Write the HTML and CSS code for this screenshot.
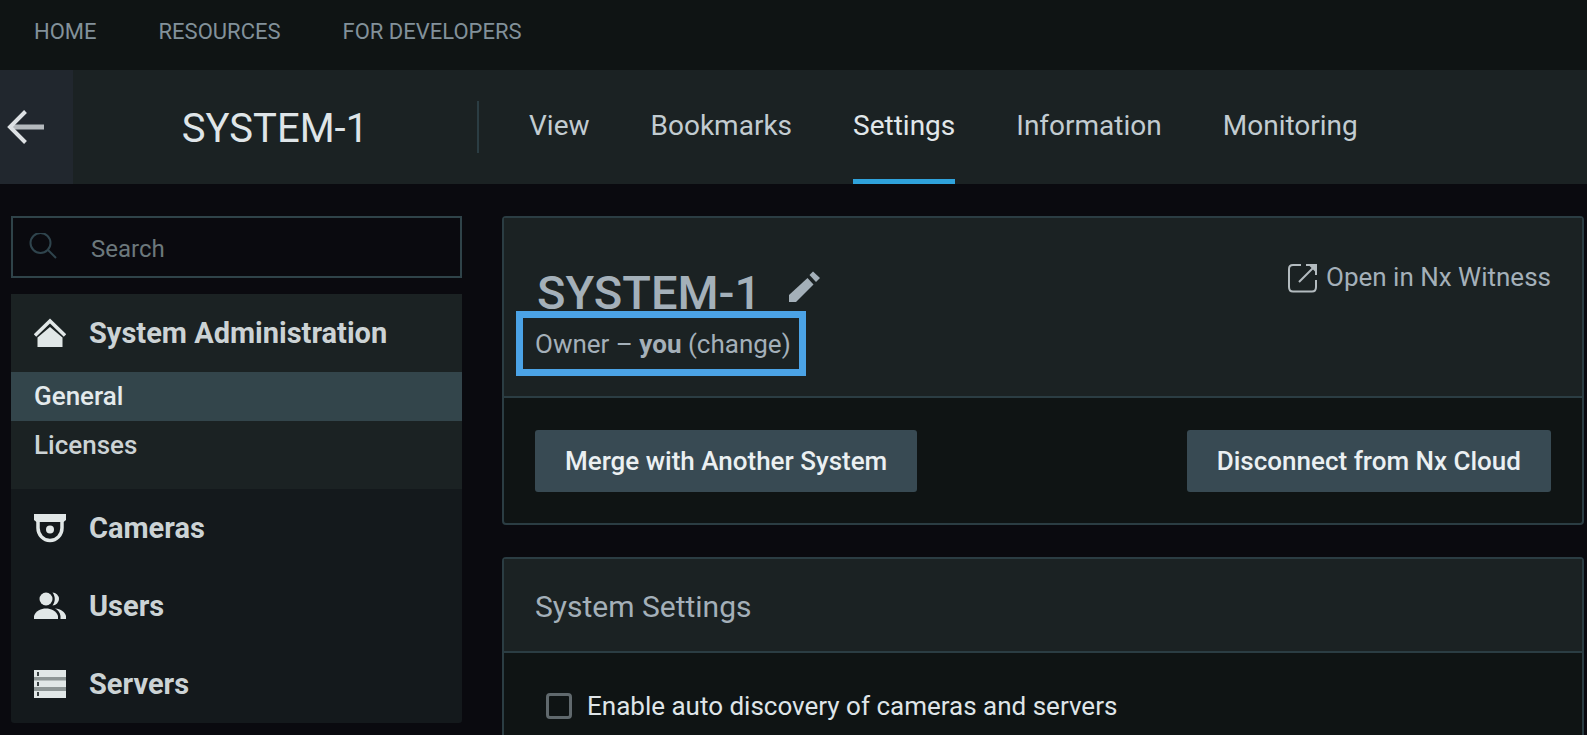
FILE: index.html
```html
<!DOCTYPE html>
<html lang="en">
<head>
    <meta charset="UTF-8">
    <meta name="viewport" content="width=device-width, initial-scale=1.0">
    <title>SYSTEM-1</title>
    <link rel="stylesheet" href="styles.css">
</head>
<body>
    <nav class="top-nav">
        <a href="#">HOME</a>
        <a href="#">RESOURCES</a>
        <a href="#">FOR DEVELOPERS</a>
    </nav>

    <header class="header">
        <button class="back" aria-label="Back">
            <svg width="38" height="36" viewBox="0 0 38 36" fill="none">
                <path d="M4 18H37" stroke="#b4b9bd" stroke-width="5"/>
                <path d="M18.500 2.500L3 18L18.500 33.500" stroke="#dde1e4" stroke-width="4"/>
            </svg>
        </button>
        <div class="system-name">SYSTEM-1</div>
        <nav class="tabs">
            <a href="#">View</a>
            <a href="#">Bookmarks</a>
            <a href="#" class="active">Settings</a>
            <a href="#">Information</a>
            <a href="#">Monitoring</a>
        </nav>
    </header>

    <div class="layout">
        <aside class="sidebar">
            <label class="search">
                <svg width="28" height="28" viewBox="0 0 28 28" fill="none" stroke="#2f444d" stroke-width="2">
                    <circle cx="11.500" cy="10" r="10"/>
                    <path d="M19 17L27 25"/>
                </svg>
                <input type="text" placeholder="Search" aria-label="Search">
            </label>

            <div class="menu">
                <div class="menu-open">
                    <a href="#" class="menu-item">
                        <svg width="32" height="32" viewBox="0 0 32 32" fill="#e1e7e7">
                            <path d="M16 10L28.500 20.500V30H3.500V20.500Z"/>
                            <path d="M1 18.500L16 4L31 18.500" fill="none" stroke="#e1e7e7" stroke-width="3.500"/>
                        </svg>
                        System Administration
                    </a>
                    <a href="#" class="sub-item selected">General</a>
                    <a href="#" class="sub-item">Licenses</a>
                </div>
                <a href="#" class="menu-item">
                    <svg width="32" height="32" viewBox="0 0 32 32" fill="#e1e7e7">
                        <path d="M0 2H32V8L29.500 10H2.500L0 8Z"/>
                        <path d="M4 9V16A12 12.500 0 0 0 28 16V9" fill="none" stroke="#e1e7e7" stroke-width="3.500"/>
                        <circle cx="16" cy="17.500" r="4"/>
                    </svg>
                    Cameras
                </a>
                <a href="#" class="menu-item">
                    <svg width="32" height="32" viewBox="0 0 32 32" fill="#e1e7e7">
                        <circle cx="12" cy="9" r="6.500"/>
                        <path d="M18.500 2.500A6.500 6.500 0 1 1 18.500 15.500C21.500 11.500 21.500 6.500 18.500 2.500Z"/>
                        <path d="M0 29V26C2 20.500 7 18.500 12 18.500S22 20.500 24 26V29Z"/>
                        <path d="M21 18.500C27 19 31 22 32 26V29H26.500V26C26 22.500 24 20 21 18.500Z"/>
                    </svg>
                    Users
                </a>
                <a href="#" class="menu-item">
                    <svg width="32" height="32" viewBox="0 0 32 32">
                        <path d="M0 2H32V30H0Z" fill="#8d9595"/>
                        <path d="M0 2H32V9H0ZM0 12.500H32V19H0ZM0 23H32V30H0Z" fill="#e1e7e7"/>
                        <path d="M3 4H5V8H3ZM3 14H5V18H3ZM3 24H5V28H3Z" fill="#3a4143"/>
                    </svg>
                    Servers
                </a>
            </div>
        </aside>

        <main class="content">
            <section class="card">
                <div class="card-head system-head">
                    <div class="system-info">
                        <h1>
                            SYSTEM-1
                            <button class="edit" aria-label="Rename">
                                <svg width="32" height="32" viewBox="0 0 32 32" fill="#a4b0b9">
                                    <path d="M0 31V24L18.500 7L24.500 13.500L7 31Z"/>
                                    <path d="M20.500 4L24 0.500L31 7L27 11Z"/>
                                </svg>
                            </button>
                        </h1>
                        <p class="owner">Owner – <b>you</b> <a href="#">(change)</a></p>
                    </div>
                    <a href="#" class="open-link">
                        <svg width="29" height="32" viewBox="0 0 29 32" fill="none" stroke="#b3bbbf" stroke-width="2">
                            <path d="M13 4H5Q1 4 1 8V26Q1 30.500 5 30.500H24Q28 30.500 28 26V19"/>
                            <path d="M18 4H28V14M28 4L11 21"/>
                            <path d="M22 4H28V10Z" fill="#b3bbbf"/>
                        </svg>
                        Open in Nx Witness
                    </a>
                </div>
                <div class="card-body actions">
                    <button class="btn">Merge with Another System</button>
                    <button class="btn">Disconnect from Nx Cloud</button>
                </div>
            </section>

            <section class="card">
                <div class="card-head">
                    <h2>System Settings</h2>
                </div>
                <div class="card-body">
                    <label class="check">
                        <input type="checkbox">
                        Enable auto discovery of cameras and servers
                    </label>
                </div>
            </section>
        </main>
    </div>
</body>
</html>
```
FILE: styles.css
```css
* {
    box-sizing: border-box;
}
body {
    margin: 0;
    background-color: #0a0a0f;
    color: #dfe5e8;
    font-family: Roboto, sans-serif;
    font-size: 26px;
    line-height: 32px;
}
a {
    color: inherit;
    text-decoration: none;
}
button, input {
    font: inherit;
    color: inherit;
}
svg {
    flex: none;
    display: block;
}
.top-nav {
    display: flex;
    gap: 62px;
    height: 70px;
    padding: 16px 34px;
    background-color: #0f1414;
    color: #82919a;
    font-size: 22px;
}
.header {
    display: flex;
    align-items: center;
    height: 114px;
    background-color: #1b2223;
}
.back {
    width: 73px;
    height: 100%;
    padding: 0 7px;
    border: none;
    background-color: #21272e;
    cursor: pointer;
}
.system-name {
    width: 406px;
    padding-top: 4px;
    border-right: 2px solid #2b3d43;
    text-align: center;
    font-size: 40px;
    line-height: 48px;
}
.tabs {
    display: flex;
    gap: 61px;
    height: 100%;
    padding-left: 50px;
    color: #c2ccd1;
    font-size: 28px;
}
.tabs a {
    padding-top: 40px;
}
.tabs .active {
    border-bottom: 5px solid #2fa2db;
    color: #e1e7ea;
}
.layout {
    display: flex;
    gap: 40px;
    padding: 32px 3px 0 11px;
}
.sidebar {
    flex: none;
    width: 451px;
}
.search {
    display: flex;
    align-items: center;
    gap: 34px;
    height: 62px;
    margin-bottom: 16px;
    padding: 0 16px;
    border: 2px solid #2f4349;
}
.search input {
    flex: 1;
    min-width: 0;
    padding: 4px 0 0;
    border: none;
    outline: none;
    background: none;
    font-size: 24px;
}
.search input::placeholder {
    color: #6c787c;
    opacity: 1;
}
.menu {
    border-radius: 3px;
    background-color: #14191c;
    color: #ccd3d5;
    font-weight: 500;
}
.menu-open {
    padding-bottom: 19px;
    background-color: #1b2223;
}
.menu-item {
    display: flex;
    align-items: center;
    gap: 23px;
    height: 78px;
    padding: 0 23px;
    font-size: 29px;
    font-weight: 700;
}
.sub-item {
    display: block;
    padding: 8px 23px 9px;
}
.sub-item.selected {
    background-color: #33454b;
    color: #e4eaec;
}
.content {
    flex: 1;
}
.card {
    margin-bottom: 32px;
    border: 2px solid #2b3d43;
    border-radius: 4px;
    background-color: #0f1414;
}
.card:last-child {
    margin-bottom: 0;
    border-bottom: none;
    border-radius: 4px 4px 0 0;
}
.card-head {
    padding: 32px 31px 28px;
    border-bottom: 2px solid #2b3d43;
    background-color: #1b2223;
}
.card-body {
    padding: 32px 31px 31px;
}
.card:last-child .card-body {
    padding-bottom: 14px;
}
.system-head {
    display: flex;
    justify-content: space-between;
    align-items: flex-start;
    height: 180px;
    padding-top: 43px;
    color: #a4b0b9;
}
h1 {
    display: flex;
    gap: 28px;
    margin: 0;
    padding: 2px 0 0 2px;
    font-size: 47px;
    font-weight: 500;
    line-height: 60px;
}
.edit {
    align-self: flex-start;
    padding: 8px 0;
    border: none;
    background: none;
    cursor: pointer;
}
h2 {
    margin: 0;
    color: #a4b0b9;
    font-size: 30px;
    font-weight: 400;
    line-height: 32px;
}
/* highlight frame around the owner line */
.owner {
    width: fit-content;
    margin: -12px -19px 0;
    padding: 10px 8px 9px 12px;
    border: 7px solid #4ba3e6;
}
.open-link {
    display: flex;
    gap: 9px;
}
.actions {
    display: flex;
    justify-content: space-between;
}
.btn {
    height: 62px;
    padding: 0 30px;
    border: none;
    border-radius: 3px;
    background-color: #384a53;
    color: #ebf0f2;
    font-weight: 500;
    cursor: pointer;
}
.check {
    display: flex;
    align-items: center;
    gap: 15px;
    padding: 5px 11px 0;
}
.check input {
    appearance: none;
    width: 26px;
    height: 26px;
    margin: 0;
    border: 3px solid #60696d;
    border-radius: 4px;
}
```
